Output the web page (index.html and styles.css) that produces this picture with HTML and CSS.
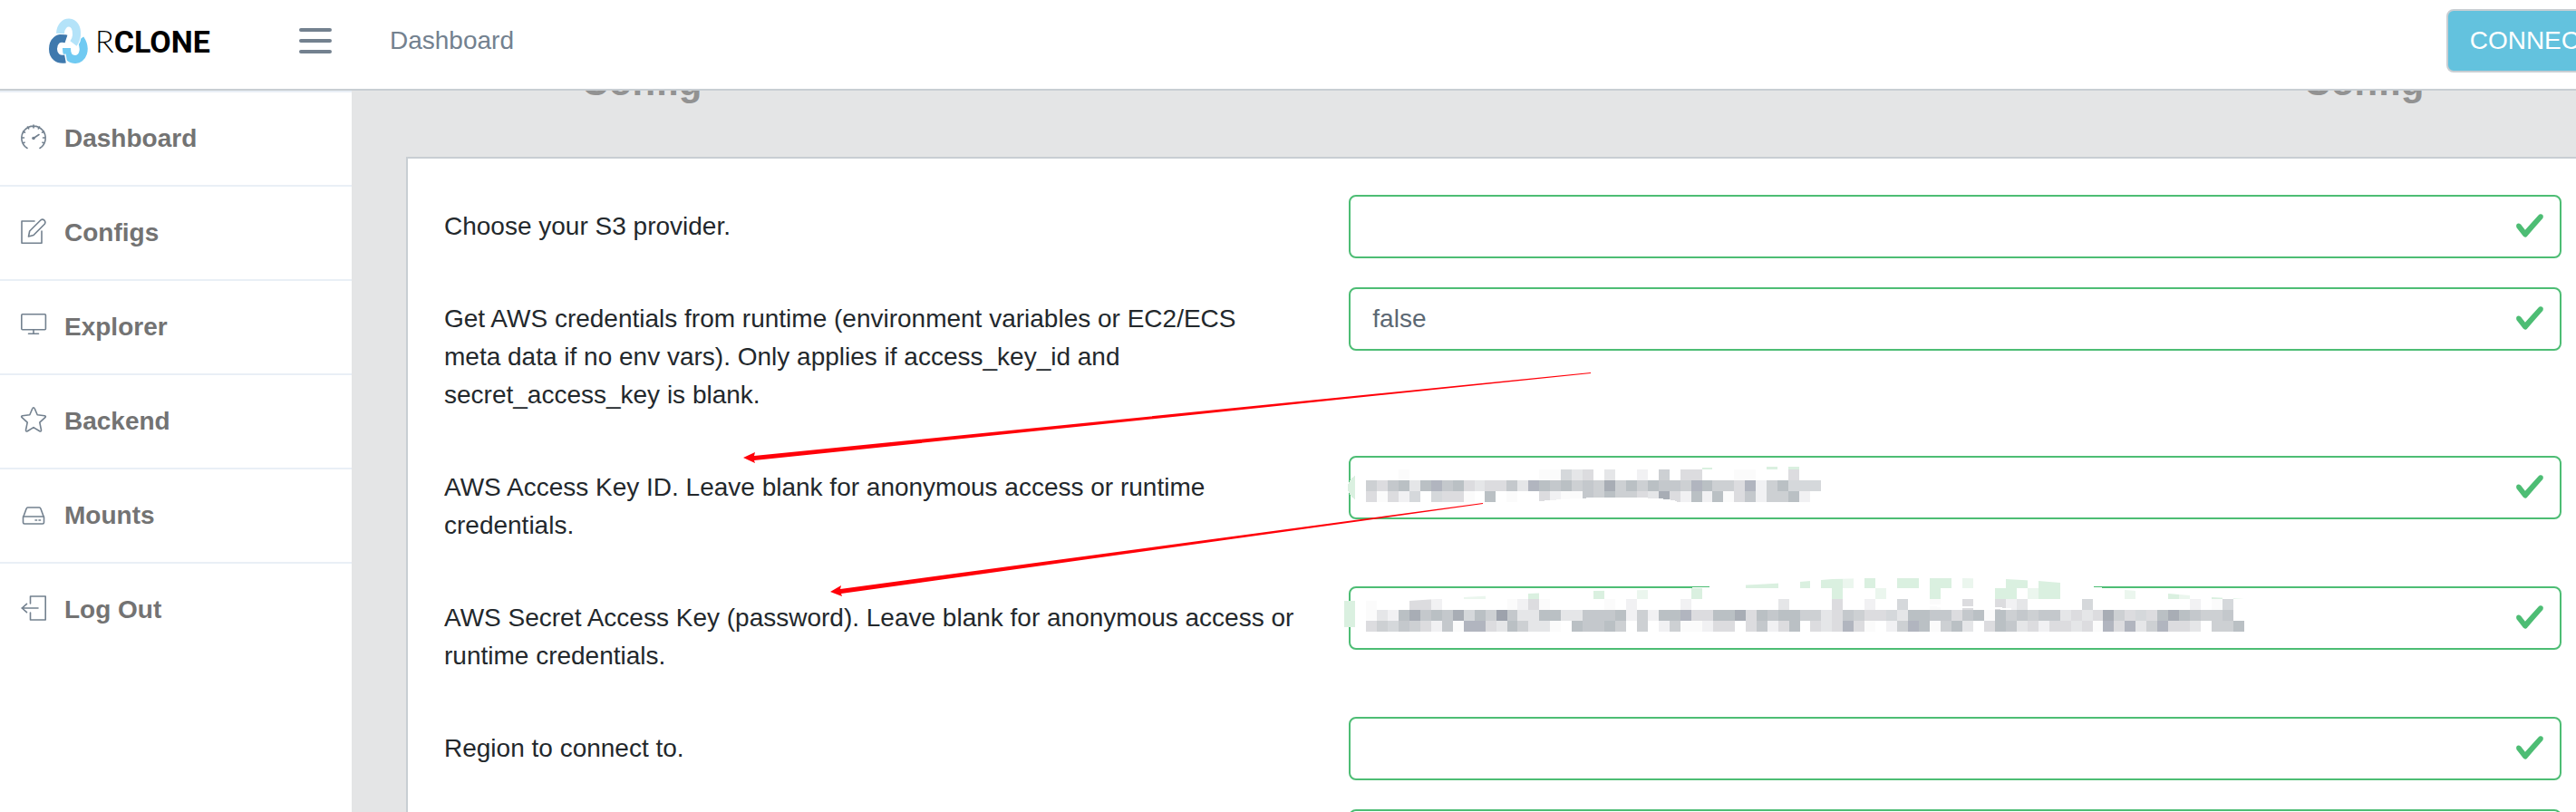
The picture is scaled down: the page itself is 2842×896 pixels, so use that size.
FILE: index.html
```
<!DOCTYPE html>
<html lang="en">
<head>
    <meta charset="UTF-8">
    <meta name="viewport" content="width=device-width, initial-scale=1.0">
    <title>Rclone - Dashboard</title>

    <link rel="stylesheet" href="styles.css">

</head>
<body>

    <svg class="sprite" aria-hidden="true">
        <symbol id="check" viewBox="0 0 8 8">
            <path d="M2.3 6.73L.6 4.53c-.4-1.04.46-1.4 1.1-.8l1.1 1.4 3.4-3.8c.6-.63 1.6-.27 1.2.7l-4 4.6c-.43.5-.8.4-1.1.1z"/>
        </symbol>
    </svg>

    <div class="app">

        <header class="app-header">
            <a class="logo" href="#">
                <svg class="logo-mark" viewBox="0 0 43 50" aria-hidden="true">
                    <path class="mid" d="M34.500 23C42 34 37 46 28.500 45.500C22 45 19.500 41 19.500 33"/>
                    <path class="gap" d="M19 23C10 20 4.500 26 4.500 34C4.500 42 10 46.500 19.500 45"/>
                    <path class="dark" d="M19 23C10 20 4.500 26 4.500 34C4.500 42 10 46.500 18 45"/>
                    <path class="gap" d="M12.500 18C13 1 32 .5 30.500 19Q30 24 27 28.500"/>
                    <path class="light" d="M12.500 17C13 1 32 .5 30.500 19Q30 24 27 28"/>
                </svg>
                <span class="logo-text"><span>R</span>CLONE</span>
            </a>

            <button class="toggler" type="button" aria-label="Toggle sidebar">
                <svg viewBox="0 0 36 28"><path d="M2 2h32M2 14h32M2 26h32"/></svg>
            </button>

            <a class="crumb" href="#">Dashboard</a>

            <button class="btn-status" type="button">CONNECTED</button>
        </header>

        <div class="app-body">

            <nav class="sidebar">
                <a href="#">
                    <svg viewBox="0 0 28 28"><path d="M7 26.500A13.200 13.200 0 1 1 21 26.500M14 1v3M7.500 3l1.200 2M2.500 8l2 1.200M1 15h2.500M2 21l2-.8M20.500 3l-1.200 2M25.500 8l-2 1.200M27 15h-2.500M26 21l-2-.8M14 15.500l6-4"/><circle class="dot" cx="14" cy="15.500" r="1.800"/></svg>
                    Dashboard
                </a>
                <a href="#">
                    <svg viewBox="0 0 28 28"><path d="M15 3H1v24.200h22V14M8.500 20l1.200-6L22 1.800q2-1.400 4 .4q1.700 2 .2 4L14 18.500z"/></svg>
                    Configs
                </a>
                <a href="#">
                    <svg viewBox="0 0 28 28"><rect x=".8" y="1.800" width="26.600" height="17" rx="1"/><path d="M14 19v4M8.500 23.200h11"/></svg>
                    Explorer
                </a>
                <a href="#">
                    <svg viewBox="0 0 28 28"><path d="M14 .8q.8 0 1.200 1l3 7 8 .9q2 .6.6 2l-6 5.500 1.700 8.300q0 2-1.800 1.300L14 22.600l-6.700 4.200q-1.800.7-1.800-1.300l1.700-8.300-6-5.500q-1.400-1.400.6-2l8-.9 3-7q.4-1 1.200-1z"/></svg>
                    Backend
                </a>
                <a href="#">
                    <svg viewBox="0 0 28 28"><path d="M7.500 7h13q1 0 1.300 1l3.700 10v5.500q0 1.500-1.500 1.500H4q-1.500 0-1.500-1.500V18L6.200 8q.3-1 1.300-1zM2.500 17h23M16 21h1.600M20 21h1.600"/></svg>
                    Mounts
                </a>
                <a href="#">
                    <svg viewBox="0 0 28 28"><path d="M10.500 9V1h16.700v26H10.500v-8M19 14H1M6.500 9.300L1.300 14l5.200 4.700"/></svg>
                    Log Out
                </a>
            </nav>

            <main class="main">

                <div class="steps">
                    <h4>Config</h4>
                    <h4>Config</h4>
                </div>

                <form class="card" action="#" method="post">

                    <div class="form-row">
                        <label for="provider">Choose your S3 provider.</label>
                        <div class="field">
                            <input type="text" id="provider">
                            <svg class="valid"><use href="#check"/></svg>
                        </div>
                    </div>

                    <div class="form-row">
                        <label for="env_auth">Get AWS credentials from runtime (environment variables or EC2/ECS meta data if no env vars). Only applies if access_key_id and secret_access_key is blank.</label>
                        <div class="field">
                            <input type="text" id="env_auth" value="false">
                            <svg class="valid"><use href="#check"/></svg>
                        </div>
                    </div>

                    <div class="form-row">
                        <label for="access_key_id">AWS Access Key ID. Leave blank for anonymous access or runtime credentials.</label>
                        <div class="field">
                            <input type="text" id="access_key_id">
                            <svg class="valid"><use href="#check"/></svg>
                            <svg class="mosaic mosaic-id" viewBox="0 0 504 36" preserveAspectRatio="none" aria-hidden="true">
                                <path class="smudge" d="M-12 7v26q-8-4-8-13t8-13z"/>
                                <path class="smudge" d="M372-2h12v2h-12zM444-3h12v3h-12zM468-3h12v3h-12z"/>
                                <g id="mosaic-id"></g>
                                <path class="brush" d="M192 36v-1q60-5 90-4 50 0 62 4v1z"/>
                            </svg>
                        </div>
                    </div>

                    <div class="form-row">
                        <label for="secret_access_key">AWS Secret Access Key (password). Leave blank for anonymous access or runtime credentials.</label>
                        <div class="field">
                            <input type="text" id="secret_access_key">
                            <svg class="valid"><use href="#check"/></svg>
                            <svg class="mosaic mosaic-secret" viewBox="0 0 972 60" preserveAspectRatio="none" aria-hidden="true">
                                <clipPath id="stroke-edge">
                                    <path id="edge" d="M0 26L48 26 108 22 180 18 252 15 312 14 390 10 432 8 468 6 516 2 552 1 660 1 708 2 744 4 768 6 810 11 840 14 888 18 936 22 972 24V60H0z"/>
                                </clipPath>
                                <path class="smudge" d="M-24 26h12v29h-12z"/>
                                <use class="brush" href="#edge"/>
                                <g id="mosaic-secret" clip-path="url(#stroke-edge)"></g>
                                <path class="brush" d="M600 29l24 1 70 3 20 1v2l-24-1-70-3-20-1z"/>
                            </svg>
                        </div>
                    </div>

                    <div class="form-row">
                        <label for="region">Region to connect to.</label>
                        <div class="field">
                            <input type="text" id="region">
                            <svg class="valid"><use href="#check"/></svg>
                        </div>
                    </div>

                    <div class="form-row">
                        <label for="endpoint"></label>
                        <div class="field">
                            <input type="text" id="endpoint" aria-label="Endpoint">
                            <svg class="valid"><use href="#check"/></svg>
                        </div>
                    </div>

                    <svg class="arrows" aria-hidden="true">
                        <path d="M370 330L383 324 382 328 1305 236V237L382 333 383 336z"/>
                        <path d="M466 478L478 471 477 475 1186 380V381L478 480 479 483z"/>
                    </svg>

                </form>

            </main>

        </div>

    </div>

    <script>

        // one letter per cell, darker towards "l", G and g are the green border
        const shades = {
            a: "#fbfbfb", b: "#f1f1f3", c: "#e5e6e8", d: "#dcdcdf",
            e: "#d5d8db", f: "#cdd0d3", h: "#c4c8cc", i: "#bac0c4",
            j: "#b1b5bf", k: "#a8adb5", l: "#9da2ac",
            G: "#daf0e0", g: "#ebf6ee"
        };

        const mosaics = {
            "mosaic-id": [
                "...a............aaecd.c..b.f.dd...aa...d..",
                "fdhicijhidcddhcjihifhfkfifihhfjiffdjbfieee",
                "dadbe.edda.i.a..dbaahfiffdckdbibiadhbffib."
            ],
            "mosaic-secret": [
                "...................................GGG..G.GGg.G..GG.GG.g...GG.GG.................",
                ".........gg....G.....G...g....G............G...g....G.....GG.gGG......g...Gg..G.G",
                "a...ddb......abda.....a.b....b........c....d..b..e..a..d..dbc.....e.........b.ae.",
                "acbikhihkeiflhcciicchhhibfbiijddiikdihiiffcdhfddeciihhdhiaifhfhhcdcdkfdedikihffh.",
                "dfehfdbhajjdcifcca.ihhif.f.bfaabdd.dhbdi.dcdjda.bfjiafic.dihcdbddcdajdjcfjddc.ffi"
            ]
        };

        for (const id in mosaics) {

            const group = document.getElementById(id);

            mosaics[id].forEach((row, y) => {

                [...row].forEach((cell, x) => {

                    if (cell === ".") return;

                    const rect = document.createElementNS("http://www.w3.org/2000/svg", "rect");
                    rect.setAttribute("x", x * 12);
                    rect.setAttribute("y", y * 12);
                    rect.setAttribute("width", 12);
                    rect.setAttribute("height", 12);
                    rect.setAttribute("fill", shades[cell]);
                    group.appendChild(rect);
                });
            });
        }

    </script>
</body>
</html>
```
FILE: styles.css
```
* {
    margin: 0;
    padding: 0;
    box-sizing: border-box;
}

body {
    height: 100vh;
    overflow: hidden;
    background-color: #e4e5e6;
    color: #23282c;
    font-family: "Liberation Sans", Arial, sans-serif;
    font-size: 28px;
    line-height: 42px;
}

a {
    text-decoration: none;
}

svg {
    fill: none;
    flex-shrink: 0;
}

.sprite {
    display: none;
}

/* the page is a little wider than the window */
.app {
    width: calc(100% + 86px);
    height: 100%;
    display: flex;
    flex-direction: column;
}

/* header */
.app-header {
    position: relative;
    z-index: 2;
    display: flex;
    align-items: center;
    flex-shrink: 0;
    height: 100px;
    padding-bottom: 8px;
    background-color: #fff;
    border-bottom: 2px solid #c8ced3;
}

.logo {
    display: flex;
    align-items: center;
    gap: 8px;
    width: 276px;
    padding-left: 54px;
}

.logo-mark {
    width: 43px;
    height: 50px;
    stroke-width: 9;
}

.logo-mark .light {
    stroke: #b4e3f9;
}

.logo-mark .dark {
    stroke: #3f79ad;
}

.logo-mark .mid {
    stroke: #70caf2;
}

.logo-mark .gap {
    stroke: #fff;
    stroke-width: 11;
}

.logo-text {
    color: #000;
    font-family: Roboto, sans-serif;
    font-size: 34px;
    font-weight: 700;
}

.logo-text span {
    font-family: Lato, sans-serif;
    font-weight: 300;
}

.toggler {
    width: 144px;
    background: none;
    border: 0;
    cursor: pointer;
}

.toggler svg {
    display: block;
    width: 36px;
    height: 28px;
    margin: auto;
    stroke: #73818f;
    stroke-width: 4;
    stroke-linecap: round;
}

.crumb {
    margin-left: 10px;
    color: #73818f;
}

.btn-status {
    margin-left: auto;
    padding: 12px 24px;
    background-color: #63c2de;
    border: 2px solid #c8ced3;
    border-radius: 8px;
    color: #fff;
    font: inherit;
    cursor: pointer;
}

.app-body {
    display: flex;
    flex: 1;
    min-height: 0;
}

/* sidebar */
.sidebar {
    flex: 0 0 388px;
    background-color: #fff;
}

.sidebar a {
    display: flex;
    align-items: center;
    gap: 20px;
    padding: 30px 23px;
    border-top: 2px solid #e9eff6;
    color: #737373;
    font-weight: 700;
}

.sidebar svg {
    width: 28px;
    height: 28px;
    margin-bottom: 4px;
    overflow: visible;
    stroke: #73818f;
    stroke-width: 1.6;
    stroke-linecap: round;
    stroke-linejoin: round;
}

.sidebar .dot {
    fill: #73818f;
    stroke: none;
}

/* content */
.main {
    flex: 1;
    padding: 0 60px;
}

/* scrolled under the header */
.steps {
    display: flex;
    justify-content: space-between;
    margin-top: -34px;
    margin-bottom: 57px;
}

.steps h4 {
    width: 520px;
    color: #929292;
    font-size: 42px;
    line-height: 50px;
    text-align: center;
}

.card {
    position: relative;
    padding: 40px;
    background-color: #fff;
    border: 2px solid #c8ced3;
}

.form-row {
    display: grid;
    grid-template-columns: 5fr 7fr;
    margin: 0 -30px 32px;
}

.form-row label {
    padding: 14px 30px;
}

.field {
    position: relative;
    height: 70px;
    margin: 0 30px;
}

.field input {
    width: 100%;
    height: 70px;
    padding: 12px 70px 12px 24px;
    background-color: #fff;
    border: 2px solid #4dbd74;
    border-radius: 8px;
    outline: none;
    color: #5c6873;
    font: inherit;
}

.valid {
    position: absolute;
    top: 17px;
    right: 18px;
    width: 34px;
    height: 34px;
    fill: #4dbd74;
}

/* blurred out keys */
.mosaic {
    position: absolute;
    left: 19px;
    overflow: visible;
    pointer-events: none;
    shape-rendering: crispEdges;
}

.mosaic-id {
    top: 15px;
    width: 502px;
    height: 36px;
}

.mosaic-secret {
    top: -10px;
    width: 969px;
    height: 60px;
}

.smudge {
    fill: #daf0e0;
}

.brush {
    fill: #fff;
}

.arrows {
    position: absolute;
    top: 0;
    left: 0;
    width: 100%;
    height: 100%;
    fill: #ff0009;
    pointer-events: none;
}
```
